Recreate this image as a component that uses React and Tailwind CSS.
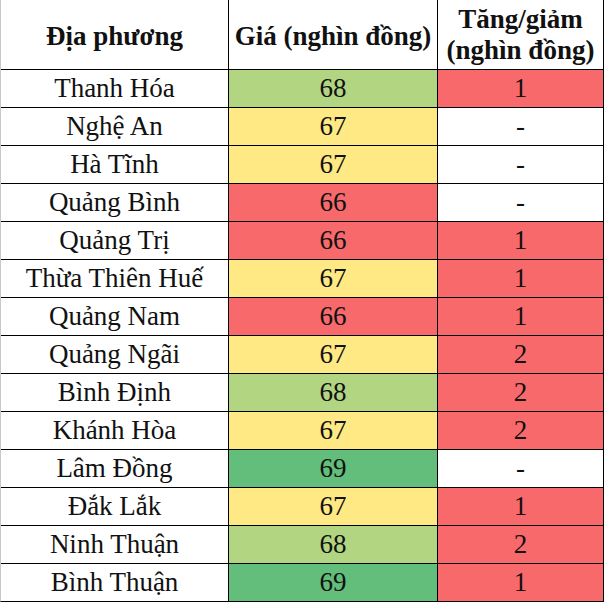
import React from "react";

const rows = [
  { name: "Thanh Hóa", price: 68, change: "1" },
  { name: "Nghệ An", price: 67, change: "-" },
  { name: "Hà Tĩnh", price: 67, change: "-" },
  { name: "Quảng Bình", price: 66, change: "-" },
  { name: "Quảng Trị", price: 66, change: "1" },
  { name: "Thừa Thiên Huế", price: 67, change: "1" },
  { name: "Quảng Nam", price: 66, change: "1" },
  { name: "Quảng Ngãi", price: 67, change: "2" },
  { name: "Bình Định", price: 68, change: "2" },
  { name: "Khánh Hòa", price: 67, change: "2" },
  { name: "Lâm Đồng", price: 69, change: "-" },
  { name: "Đắk Lắk", price: 67, change: "1" },
  { name: "Ninh Thuận", price: 68, change: "2" },
  { name: "Bình Thuận", price: 69, change: "1" },
];

const priceBg = {
  66: "bg-[#f8696b]",
  67: "bg-[#ffe984]",
  68: "bg-[#b1d580]",
  69: "bg-[#63be7b]",
};

const App = () => {
  return (
    <div className="min-h-screen bg-white text-[#111] font-serif">
      <div className="grid w-[604px] grid-cols-[227px_208px_165px] gap-px bg-black border-l border-l-[#c8c8c8] border-r border-b border-black font-['Liberation_Serif']">
        {/* Header */}
        <div className="h-[69px] pt-1 bg-white flex items-center justify-center text-[27px] font-bold leading-none">
          Địa phương
        </div>
        <div className="h-[69px] pt-1 bg-white flex items-center justify-center text-[27px] font-bold leading-none">
          Giá (nghìn đồng)
        </div>
        <div className="h-[69px] bg-white flex flex-col items-center justify-center text-[27px] font-bold leading-[31px]">
          <span>Tăng/giảm</span>
          <span>(nghìn đồng)</span>
        </div>

        {/* Rows */}
        {rows.map((row, index) => (
          <React.Fragment key={index}>
            <div className="h-[37px] bg-white flex items-center justify-center text-[27px] leading-none">
              {row.name}
            </div>
            <div
              className={`h-[37px] flex items-center justify-center text-[27px] leading-none ${priceBg[row.price]}`}
            >
              {row.price}
            </div>
            <div
              className={`h-[37px] flex items-center justify-center text-[27px] leading-none ${
                row.change === "-" ? "bg-white" : "bg-[#f8696b]"
              }`}
            >
              {row.change}
            </div>
          </React.Fragment>
        ))}
      </div>
    </div>
  );
};

export default App;
